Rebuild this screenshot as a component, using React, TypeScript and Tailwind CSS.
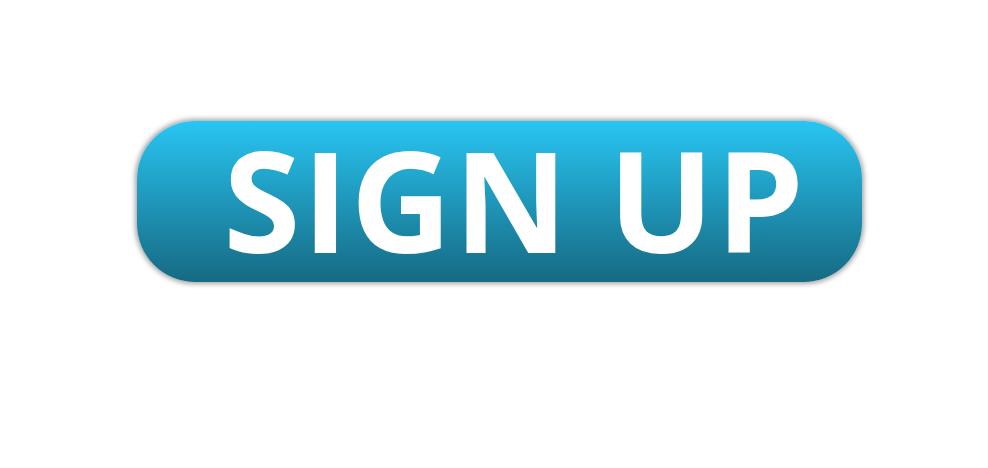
import React from "react";

export default function App() {
  return (
    <div className="w-[988px] h-[468px] bg-white pt-[121px] pl-[137px]">
      <button
        className="w-[725px] h-[161px] rounded-[58px] bg-gradient-to-b from-[#28c6f3] to-[#166a83] shadow-[0_0_5px_2px_rgba(0,0,0,0.35)] flex items-center justify-center pl-[30px] text-white font-bold text-[140px] leading-none"
        style={{ fontFamily: '"Open Sans", "Noto Sans", sans-serif' }}
      >
        <span className="tracking-[2px] -mt-[5px]">SIGN UP</span>
      </button>
    </div>
  );
}
